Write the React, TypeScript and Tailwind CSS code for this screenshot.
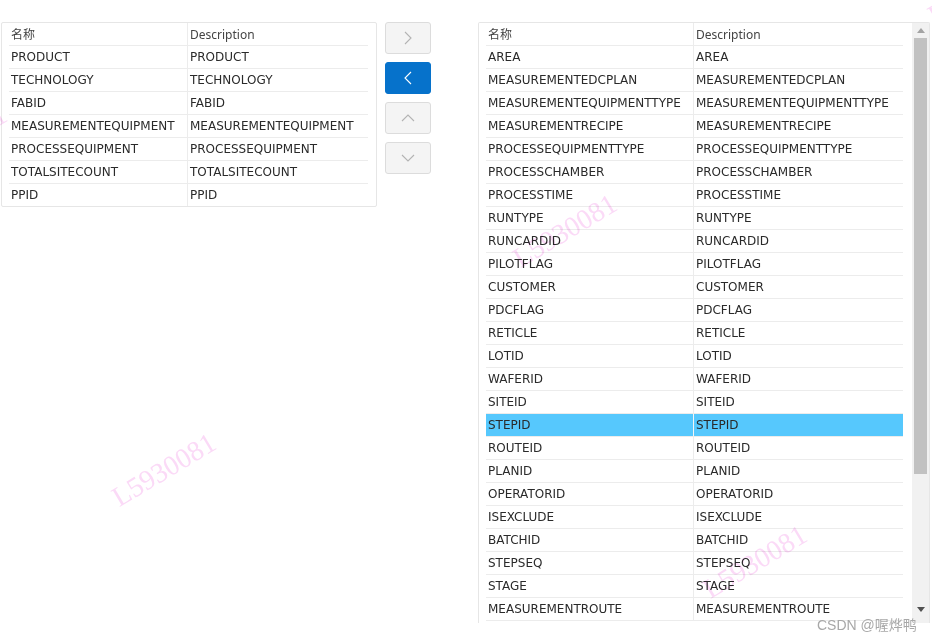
import React from "react";

const leftRows = [
  "PRODUCT",
  "TECHNOLOGY",
  "FABID",
  "MEASUREMENTEQUIPMENT",
  "PROCESSEQUIPMENT",
  "TOTALSITECOUNT",
  "PPID",
];

const rightRows = [
  "AREA",
  "MEASUREMENTEDCPLAN",
  "MEASUREMENTEQUIPMENTTYPE",
  "MEASUREMENTRECIPE",
  "PROCESSEQUIPMENTTYPE",
  "PROCESSCHAMBER",
  "PROCESSTIME",
  "RUNTYPE",
  "RUNCARDID",
  "PILOTFLAG",
  "CUSTOMER",
  "PDCFLAG",
  "RETICLE",
  "LOTID",
  "WAFERID",
  "SITEID",
  "STEPID",
  "ROUTEID",
  "PLANID",
  "OPERATORID",
  "ISEXCLUDE",
  "BATCHID",
  "STEPSEQ",
  "STAGE",
  "MEASUREMENTROUTE",
];

const Chevron = ({ dir, color }: { dir: "left" | "right" | "up" | "down"; color: string }) => {
  const pts = {
    right: "4,1 10,7 4,13",
    left: "10,1 4,7 10,13",
    up: "1,10 7,4 13,10",
    down: "1,4 7,10 13,4",
  }[dir];
  return (
    <svg width="14" height="14" viewBox="0 0 14 14" fill="none">
      <polyline points={pts} stroke={color} strokeWidth="1.1" />
    </svg>
  );
};

const MoveButton = ({ dir, active }: { dir: "left" | "right" | "up" | "down"; active?: boolean }) => (
  <button
    className={
      active
        ? "w-[46px] h-[32px] rounded-[3px] bg-[#0672cb] border border-[#0672cb] flex items-center justify-center"
        : "w-[46px] h-[32px] rounded-[3px] bg-[#f4f4f4] border border-[#dcdcdc] flex items-center justify-center"
    }
  >
    <Chevron dir={dir} color={active ? "#ffffff" : "#b3b3b3"} />
  </button>
);

const Row = ({
  name,
  w1,
  w2,
  last,
  selected,
}: {
  name: string;
  w1: string;
  w2: string;
  last?: boolean;
  selected?: boolean;
}) => (
  <div
    className={
      last
        ? "flex h-[22px] shrink-0"
        : "flex h-[23px] shrink-0 border-b border-[#ececec]"
    }
  >
    <div
      className={
        w1 +
        " border-r border-[#ececec] pl-[2px] leading-[22px] whitespace-nowrap overflow-hidden " +
        (selected ? "bg-[#56c8fd] border-r-[#f4f4f4]" : "")
      }
    >
      {name}
    </div>
    <div
      className={
        w2 +
        " pl-[2px] leading-[22px] whitespace-nowrap overflow-hidden " +
        (selected ? "bg-[#56c8fd]" : "")
      }
    >
      {name}
    </div>
  </div>
);

const Header = ({ w1, w2 }: { w1: string; w2: string }) => (
  <div className="flex h-[23px] shrink-0 border-b border-[#ececec] font-['Noto_Sans','Noto_Sans_CJK_SC',sans-serif] text-[#444]">
    <div className={w1 + " border-r border-[#ececec] pl-[2px] leading-[23px]"}>名称</div>
    <div className={w2 + " pl-[2px] leading-[23px]"}>Description</div>
  </div>
);

const Watermark = ({ className }: { className: string }) => (
  <div
    className={
      "absolute pointer-events-none mix-blend-multiply -translate-x-1/2 -translate-y-1/2 -rotate-[31deg] font-['Liberation_Serif',serif] text-[28px] leading-none text-[#fbdaf7] whitespace-nowrap " +
      className
    }
  >
    L5930081
  </div>
);

export default function App() {
  return (
    <div className="relative w-[932px] h-[643px] overflow-hidden bg-white text-[12px] text-[#2a2a2a] font-['DejaVu_Sans','Noto_Sans_CJK_SC',sans-serif]">
      <div className="flex items-start pt-[22px] pl-px">
        {/* left list */}
        <div className="w-[376px] border border-[#e6e6e6] rounded-[2px] pl-[7px] pr-[8px] flex flex-col">
          <Header w1="w-[179px]" w2="flex-1" />
          {leftRows.map((r, i) => (
            <Row key={r} name={r} w1="w-[179px]" w2="flex-1" last={i === leftRows.length - 1} />
          ))}
        </div>

        {/* move buttons */}
        <div className="ml-[8px] flex flex-col gap-[8px]">
          <MoveButton dir="right" />
          <MoveButton dir="left" active />
          <MoveButton dir="up" />
          <MoveButton dir="down" />
        </div>

        {/* right list */}
        <div className="ml-[47px] w-[452px] h-[601px] border-t border-x border-[#e6e6e6] rounded-t-[2px] pl-[7px] flex">
          <div className="w-[417px] flex flex-col overflow-hidden">
            <Header w1="w-[208px]" w2="flex-1" />
            {rightRows.map((r) => (
              <Row key={r} name={r} w1="w-[208px]" w2="flex-1" selected={r === "STEPID"} />
            ))}
          </div>
          <div className="ml-[9px] w-[17px] bg-[#f1f1f1] flex flex-col items-center">
            <div className="h-[15px] flex items-center justify-center">
              <svg width="8" height="5" viewBox="0 0 8 5">
                <polygon points="0,5 4,0 8,5" fill="#a3a3a3" />
              </svg>
            </div>
            <div className="w-[13px] h-[436px] bg-[#c1c1c1]" />
            <div className="flex-1" />
            <div className="h-[22px] flex items-start pt-[6px] justify-center">
              <svg width="8" height="5" viewBox="0 0 8 5">
                <polygon points="0,0 8,0 4,5" fill="#505050" />
              </svg>
            </div>
          </div>
        </div>
      </div>

      <Watermark className="left-[-45px] top-[142px]" />
      <Watermark className="left-[164px] top-[470px]" />
      <Watermark className="left-[565px] top-[231px]" />
      <Watermark className="left-[755px] top-[562px]" />
      <Watermark className="left-[980px] top-[-12px]" />

      <div className="absolute left-[817px] top-[615px] text-[14px] text-[#a8a8a8] font-['Liberation_Sans','Noto_Sans_CJK_SC',sans-serif] whitespace-nowrap">
        CSDN @喔烨鸭
      </div>
    </div>
  );
}
